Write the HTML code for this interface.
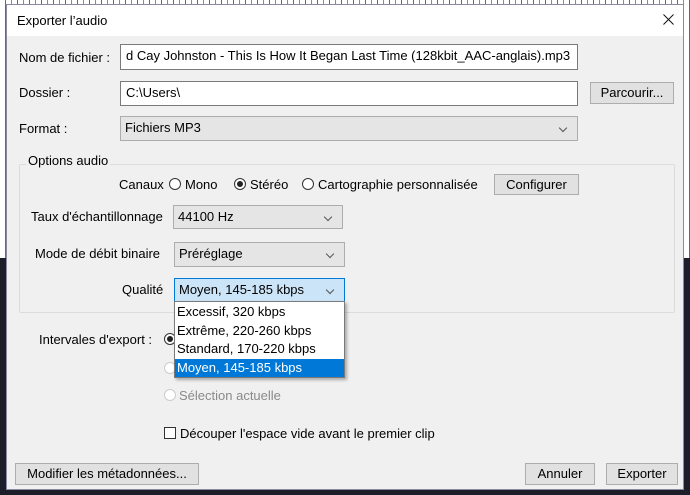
<!DOCTYPE html>
<html><head><meta charset="utf-8"><style>
*{margin:0;padding:0;box-sizing:border-box}
body{width:690px;height:495px;overflow:hidden;position:relative;background:#1e1e2a;font-family:"Liberation Sans",sans-serif;font-size:13px;color:#000}
.a{position:absolute;white-space:nowrap}
.bgtop{left:0;top:0;width:690px;height:258px;background:repeating-linear-gradient(90deg,#fff 0 5px,#5a5adf 5px 6px,#fff 6px 11px,#8080e8 11px 12px)}
.dlg{left:6px;top:4px;width:678px;height:486px;background:#f0f0f0;border:1px solid #8a8aa0}
.tb{left:0;top:0;width:676px;height:31px;background:#fff}
.in{background:#fff;border:1px solid #7a7a7a;padding-left:5px;line-height:22px;overflow:hidden}
.sel{background:#e5e5e5;border:1px solid #adadad;padding-left:4px;line-height:22px}
.sel:after{content:"";position:absolute;right:11px;top:8px;width:5px;height:5px;border-right:1px solid #555;border-bottom:1px solid #555;transform:rotate(45deg)}
.btn{background:#e1e1e1;border:1px solid #adadad;text-align:center;line-height:19px}
.r{width:12px;height:12px;border:1px solid #333;border-radius:50%;background:#fff}
.r.on:after{content:"";position:absolute;left:2px;top:2px;width:6px;height:6px;border-radius:50%;background:#222}
</style></head><body>
<div class="a bgtop"></div>
<div class="a dlg">
<div class="a tb"></div>
<div class="a" style="left:10px;top:8px">Exporter l’audio</div>
<svg class="a" style="left:656px;top:9px" width="11" height="11" viewBox="0 0 11 11"><path d="M0.5 0.5L10.5 10.5M10.5 0.5L0.5 10.5" stroke="#111" stroke-width="1"/></svg>
<div class="a" style="left:12px;top:45px">Nom de fichier :</div>
<div class="a in" style="left:113px;top:39px;width:458px;height:26px">d Cay Johnston - This Is How It Began Last Time (128kbit_AAC-anglais).mp3</div>
<div class="a" style="left:12px;top:80px">Dossier :</div>
<div class="a in" style="left:113px;top:76px;width:458px;height:25px">C:\Users\</div>
<div class="a btn" style="left:583px;top:77px;width:84px;height:22px">Parcourir...</div>
<div class="a" style="left:12px;top:116px">Format :</div>
<div class="a sel" style="left:113px;top:111px;width:458px;height:25px">Fichiers MP3</div>
<div class="a" style="left:12px;top:159px;width:656px;height:149px;border:1px solid #dcdcdc;border-radius:2px"></div>
<div class="a" style="left:19px;top:148px;background:#f0f0f0;padding:0 2px">Options audio</div>
<div class="a" style="left:112px;top:172px">Canaux</div>
<div class="a r" style="left:162px;top:173px"></div><div class="a" style="left:178px;top:172px">Mono</div>
<div class="a r on" style="left:227px;top:173px"></div><div class="a" style="left:243px;top:172px">Stéréo</div>
<div class="a r" style="left:295px;top:173px"></div><div class="a" style="left:311px;top:172px">Cartographie personnalisée</div>
<div class="a btn" style="left:487px;top:169px;width:85px;height:21px">Configurer</div>
<div class="a" style="left:24px;top:204px">Taux d'échantillonnage</div>
<div class="a sel" style="left:166px;top:200px;width:170px;height:24px">44100 Hz</div>
<div class="a" style="left:28px;top:241px">Mode de débit binaire</div>
<div class="a sel" style="left:167px;top:237px;width:171px;height:25px">Préréglage</div>
<div class="a" style="left:115px;top:277px">Qualité</div>
<div class="a sel" style="left:167px;top:273px;width:171px;height:24px;background:#cce4f7;border-color:#0078d7">Moyen, 145-185 kbps</div>
<div class="a" style="left:32px;top:327px">Intervales d'export :</div>
<div class="a r on" style="left:157px;top:328px"></div>
<div class="a r" style="left:157px;top:357px;border-color:#ccc"></div>
<div class="a r" style="left:157px;top:384px;border-color:#ccc"></div>
<div class="a" style="left:172px;top:383px;color:#8a8a8a">Sélection actuelle</div>
<div class="a" style="left:157px;top:422px;width:12px;height:12px;border:1px solid #333;background:#fff"></div>
<div class="a" style="left:173px;top:421px">Découper l'espace vide avant le premier clip</div>
<div class="a" style="left:167px;top:296px;width:171px;height:77px;background:#fff;border:1px solid #7a7a7a;box-shadow:2px 2px 3px rgba(0,0,0,.3)">
<div style="padding-left:2px;line-height:18.5px;margin-top:1px">Excessif, 320 kbps<br>Extrême, 220-260 kbps<br>Standard, 170-220 kbps<div style="background:#0078d7;color:#fff;margin-left:-2px;padding-left:2px">Moyen, 145-185 kbps</div></div></div>
<div class="a btn" style="left:8px;top:458px;width:184px;height:22px">Modifier les métadonnées...</div>
<div class="a btn" style="left:518px;top:458px;width:70px;height:22px">Annuler</div>
<div class="a btn" style="left:599px;top:458px;width:72px;height:22px">Exporter</div>
</div>
</body></html>
